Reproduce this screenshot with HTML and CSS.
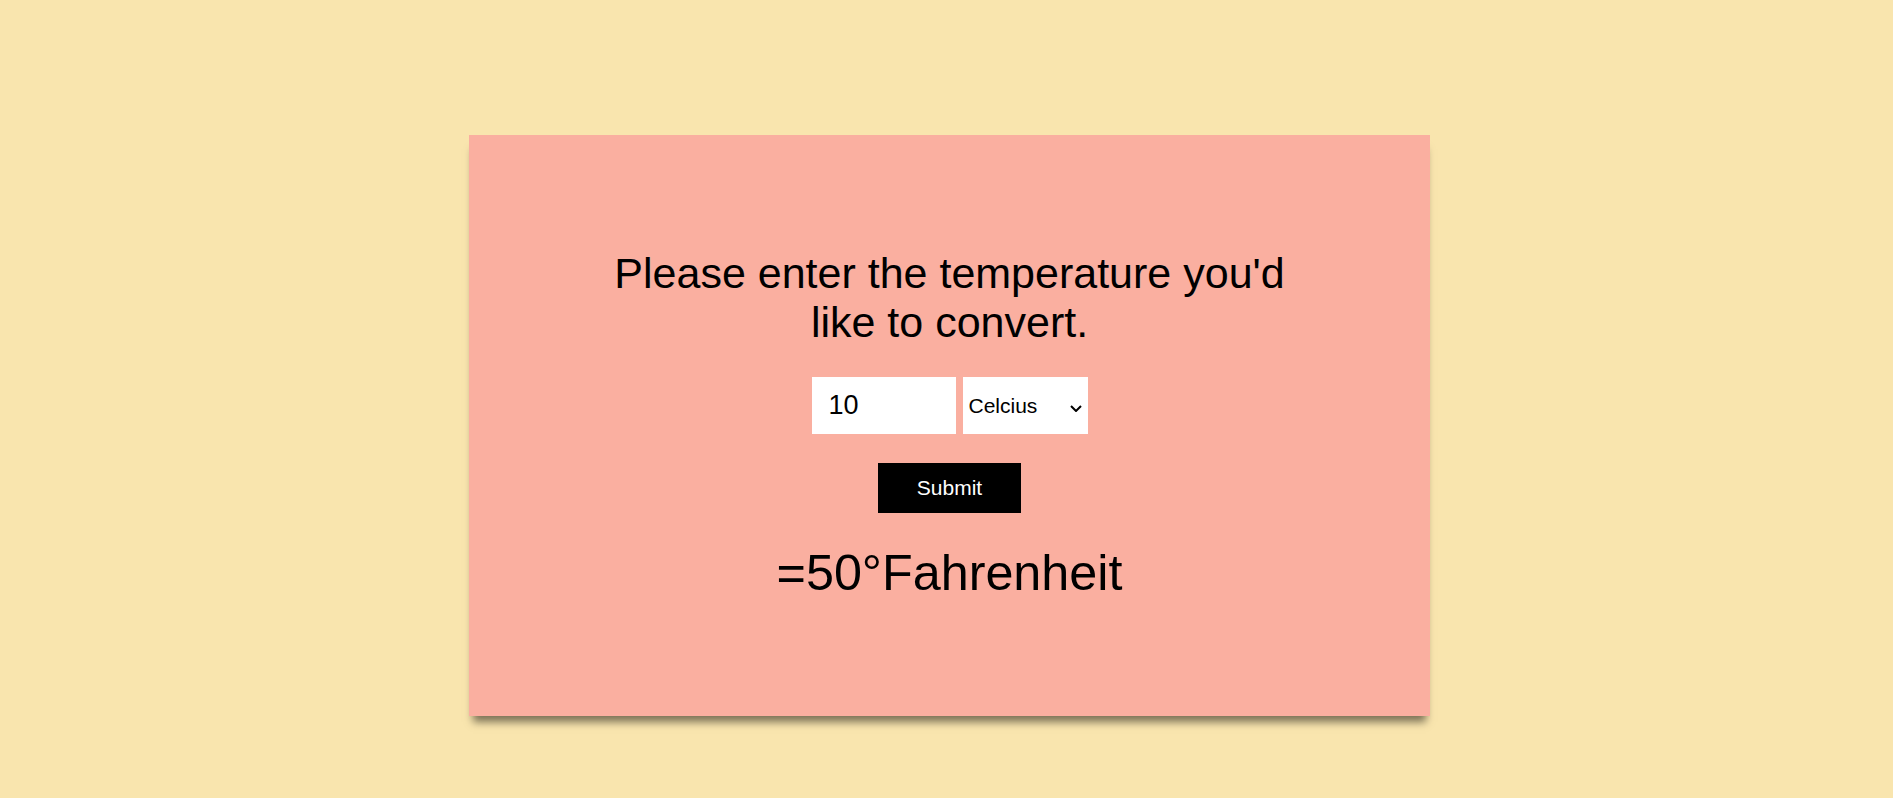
FILE: index.html
```html
<!DOCTYPE html>
<html lang="en">
<head>
<meta charset="utf-8">
<title>Temperature Converter</title>
<link rel="stylesheet" href="styles.css">
</head>
<body>
<main class="card">
  <h1 class="prompt">Please enter the temperature you'd like to convert.</h1>
  <form class="form">
    <div class="fields">
      <input class="temp-input" type="text" value="10">
      <div class="select-wrap">
        <select class="unit-select">
          <option selected>Celcius</option>
          <option>Fahrenheit</option>
        </select>
        <svg class="chevron" width="12" height="7" viewBox="0 0 12 7" aria-hidden="true"><polyline points="1,1 6,6 11,1" fill="none" stroke="#000" stroke-width="2"/></svg>
      </div>
    </div>
    <button class="submit" type="button">Submit</button>
  </form>
  <p class="result">=50°Fahrenheit</p>
</main>
</body>
</html>
```

FILE: styles.css
```css
html, body {
  margin: 0;
  padding: 0;
}

body {
  background: #F9E5AE;
  font-family: "Liberation Sans", Arial, sans-serif;
  color: #000;
  padding-top: 135px;
  height: 798px;
  box-sizing: border-box;
}

.card {
  width: 961px;
  height: 581px;
  margin-left: 469px;
  background: #FAAFA0;
  box-shadow: 0 10px 8px -4px rgba(0, 0, 0, 0.5);
  display: flex;
  flex-direction: column;
  align-items: center;
  padding-top: 114px;
  box-sizing: border-box;
}

.prompt {
  margin: 0;
  max-width: 710px;
  font-size: 43px;
  font-weight: normal;
  text-align: center;
  line-height: normal;
}

.form {
  margin: 30px 0 0;
  display: flex;
  flex-direction: column;
  align-items: center;
}

.fields {
  display: flex;
  gap: 7px;
}

.temp-input {
  width: 144px;
  height: 57px;
  box-sizing: border-box;
  border: none;
  outline: none;
  background: #fff;
  padding: 0 0 0 17px;
  font-family: "Liberation Sans", Arial, sans-serif;
  font-size: 27px;
  color: #000;
}

.select-wrap {
  position: relative;
  width: 125px;
  height: 57px;
}

.unit-select {
  appearance: none;
  -webkit-appearance: none;
  width: 125px;
  height: 57px;
  box-sizing: border-box;
  border: none;
  border-radius: 0;
  outline: none;
  background-color: #fff;
  padding: 0 0 0 6px;
  font-family: "Liberation Sans", Arial, sans-serif;
  font-size: 21px;
  color: #000;
}

.chevron {
  position: absolute;
  right: 6px;
  top: 28px;
  pointer-events: none;
}

.submit {
  margin-top: 29px;
  width: 143px;
  height: 50px;
  border: none;
  background: #000;
  color: #fff;
  font-family: "Liberation Sans", Arial, sans-serif;
  font-size: 21px;
  padding: 0;
}

.result {
  margin: 30px 0 0;
  font-size: 50.3px;
  line-height: normal;
}
```
